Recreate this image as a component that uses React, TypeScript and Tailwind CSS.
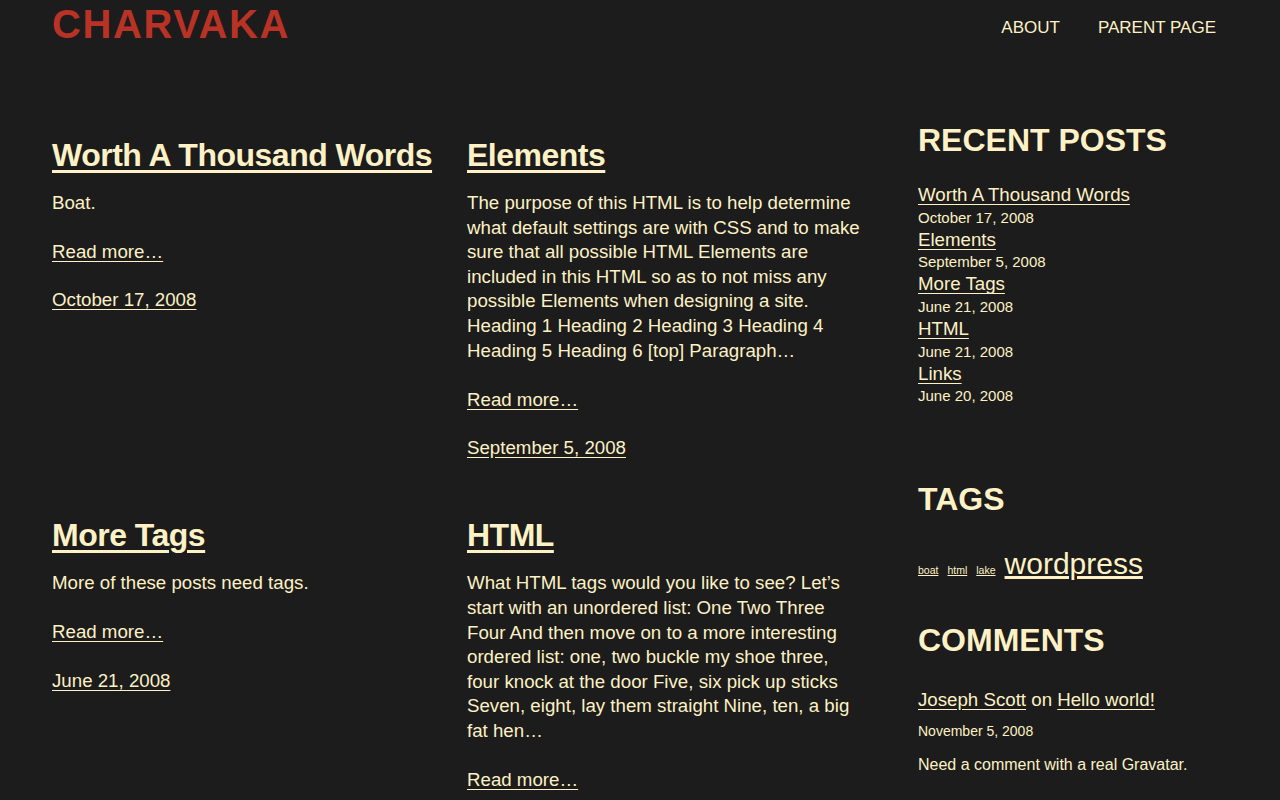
import React from 'react';

const posts = [
  {
    title: 'Worth A Thousand Words',
    excerpt: 'Boat.',
    date: 'October 17, 2008',
  },
  {
    title: 'Elements',
    excerpt:
      'The purpose of this HTML is to help determine what default settings are with CSS and to make sure that all possible HTML Elements are included in this HTML so as to not miss any possible Elements when designing a site. Heading 1 Heading 2 Heading 3 Heading 4 Heading 5 Heading 6 [top] Paragraph…',
    date: 'September 5, 2008',
  },
  {
    title: 'More Tags',
    excerpt: 'More of these posts need tags.',
    date: 'June 21, 2008',
  },
  {
    title: 'HTML',
    excerpt:
      'What HTML tags would you like to see? Let’s start with an unordered list: One Two Three Four And then move on to a more interesting ordered list: one, two buckle my shoe three, four knock at the door Five, six pick up sticks Seven, eight, lay them straight Nine, ten, a big fat hen…',
    date: 'June 21, 2008',
  },
];

const recent = [
  { title: 'Worth A Thousand Words', date: 'October 17, 2008' },
  { title: 'Elements', date: 'September 5, 2008' },
  { title: 'More Tags', date: 'June 21, 2008' },
  { title: 'HTML', date: 'June 21, 2008' },
  { title: 'Links', date: 'June 20, 2008' },
];

const PostCard: React.FC<{ title: string; excerpt: string; date: string }> = ({ title, excerpt, date }) => (
  <article className="mb-[55px]">
    <h2 className="text-[32px] font-bold leading-[40px] tracking-[-0.5px] mb-[16px] whitespace-nowrap">
      <a href="#" className="underline decoration-[3px] underline-offset-[4px]">{title}</a>
    </h2>
    <p className="text-[18.7px] leading-[24.6px] mb-[24.5px]">{excerpt}</p>
    <p className="text-[18.7px] leading-[24.6px] mb-[23.5px]">
      <a href="#" className="underline underline-offset-[3px]">Read more…</a>
    </p>
    <p className="text-[18.7px] leading-[24.6px] font-medium">
      <a href="#" className="underline underline-offset-[3px]">{date}</a>
    </p>
  </article>
);

export default function App() {
  return (
    <div
      className="min-h-screen bg-[#1c1c1c] text-[#fdf1c5] px-[52px]"
      style={{ fontFamily: '"Liberation Sans", Arial, sans-serif' }}
    >
      {/* Header */}
      <header className="flex items-start justify-between">
        <a href="#" className="text-[40px] font-bold leading-[48px] text-[#b93226] tracking-[1.6px]">
          CHARVAKA
        </a>
        <nav className="flex gap-[38px] pt-[15px] pr-[12px] text-[17px]">
          <a href="#">ABOUT</a>
          <a href="#">PARENT PAGE</a>
        </nav>
      </header>

      <div className="flex pt-[84px]">
        {/* Posts */}
        <main className="w-[813px] grid grid-cols-[392px_398px] gap-x-[23px] pt-[3px]">
          {posts.map((p) => (
            <PostCard key={p.title} {...p} />
          ))}
        </main>

        {/* Sidebar */}
        <aside className="ml-[53px] w-[310px] -mt-[12px]">
          <h2 className="text-[32px] font-bold leading-[40px] mb-[23px]">RECENT POSTS</h2>
          <ul>
            {recent.map((r) => (
              <li key={r.title}>
                <a href="#" className="text-[18.7px] leading-[23.5px] underline underline-offset-[3px] block">
                  {r.title}
                </a>
                <div className="text-[15px] leading-[21.2px]">{r.date}</div>
              </li>
            ))}
          </ul>

          <h2 className="text-[32px] font-bold leading-[40px] mt-[72px] mb-[22px]">TAGS</h2>
          <div className="flex items-baseline gap-[9px]">
            <a href="#" className="text-[10.5px] underline">boat</a>
            <a href="#" className="text-[10.5px] underline">html</a>
            <a href="#" className="text-[10.5px] underline">lake</a>
            <a href="#" className="text-[30px] underline">wordpress</a>
          </div>

          <h2 className="text-[32px] font-bold leading-[40px] mt-[34px] mb-[28px]">COMMENTS</h2>
          <div className="text-[18.7px] leading-[24px]">
            <a href="#" className="underline underline-offset-[3px]">Joseph Scott</a> on{' '}
            <a href="#" className="underline underline-offset-[3px]">Hello world!</a>
          </div>
          <div className="text-[14px] leading-[20px] mt-[9px]">November 5, 2008</div>
          <p className="text-[16px] leading-[22px] mt-[13px]">Need a comment with a real Gravatar.</p>
        </aside>
      </div>
    </div>
  );
}
